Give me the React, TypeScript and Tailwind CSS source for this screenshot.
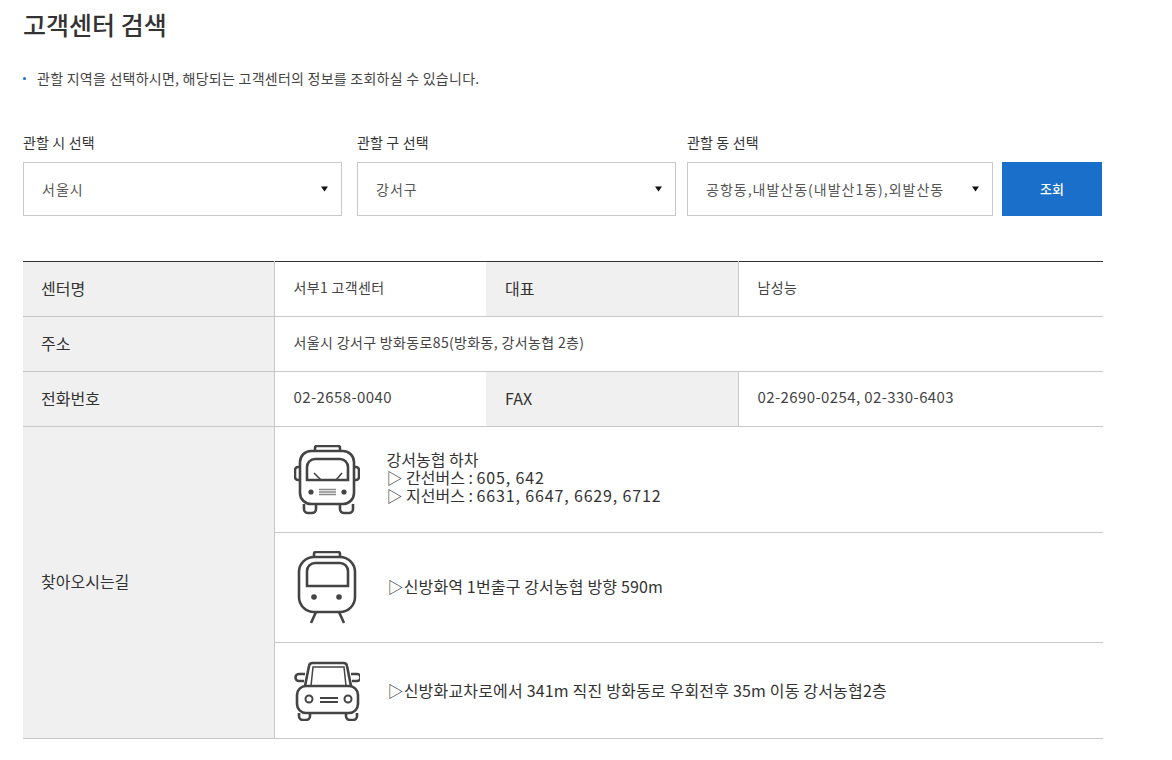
const font = '[font-family:"Noto_Sans_CJK_KR","Noto_Sans",sans-serif]';

function Caret() {
  return (
    <svg width="7" height="6" viewBox="0 0 7 6" className="shrink-0">
      <path d="M0 0.5h7L3.5 5.5z" fill="#111" />
    </svg>
  );
}

function SelectBox({ label, value, width }: { label: string; value: string; width: string }) {
  return (
    <div className={width}>
      <div className="text-[14px] leading-[20px] text-[#333] tracking-[0.15px] mb-[10px]">{label}</div>
      <div className="h-[54px] border border-[#c8c8c8] bg-white flex items-center justify-between pl-[18px] pr-[13px]">
        <span className="text-[14px] text-[#555] tracking-[1px]">{value}</span>
        <Caret />
      </div>
    </div>
  );
}

function BusIcon() {
  return (
    <svg width="66" height="70" viewBox="0 0 66 70" fill="none" stroke="#444" strokeWidth="2.6">
      <path d="M21 6V3a2 2 0 0 1 2-2h21a2 2 0 0 1 2 2v3" />
      <rect x="6" y="6" width="54" height="53" rx="11" />
      <path d="M13 35V22a8 8 0 0 1 8-8h25a8 8 0 0 1 8 8v13z" />
      <path d="M6 22H4a3 3 0 0 0-3 3v7a3 3 0 0 0 3 3h2M60 22h2a3 3 0 0 1 3 3v7a3 3 0 0 1-3 3h-2" />
      <path d="M20 28l7 7M48 28l-6 7" strokeWidth="1.6" />
      <path d="M25 44.5h17M25 47h17M25 49.5h17" strokeWidth="1.4" stroke="#888" />
      <circle cx="17" cy="47" r="2.6" fill="#444" stroke="none" />
      <circle cx="50" cy="47" r="2.6" fill="#444" stroke="none" />
      <path d="M10 59v5a4 4 0 0 0 4 4h4a4 4 0 0 0 4-4v-5M46 59v5a4 4 0 0 0 4 4h5a4 4 0 0 0 4-4v-5" />
    </svg>
  );
}

function TrainIcon() {
  return (
    <svg width="60" height="74" viewBox="0 0 60 74" fill="none" stroke="#444" strokeWidth="2.6">
      <path d="M17 6V3a2 2 0 0 1 2-2h22a2 2 0 0 1 2 2v3" />
      <rect x="2" y="6" width="56" height="55" rx="15" />
      <path d="M10 35V20a8 8 0 0 1 8-8h25a8 8 0 0 1 8 8v15z" />
      <circle cx="17" cy="46" r="2.8" fill="#444" stroke="none" />
      <circle cx="42" cy="46" r="2.8" fill="#444" stroke="none" />
      <path d="M19 61l-5 11M42 61l5 11" />
    </svg>
  );
}

function CarIcon() {
  return (
    <svg width="66" height="60" viewBox="0 0 66 60" fill="none" stroke="#444" strokeWidth="2.6">
      <path d="M11 25l4-20a3.5 3.5 0 0 1 3.5-3h31a3.5 3.5 0 0 1 3.5 3l4 20" />
      <path d="M17 25l2-19h31l2 19" strokeWidth="1.5" />
      <path d="M11 13H5a3.5 3.5 0 0 0 0 7h5M57 13h6a3.5 3.5 0 0 1 0 7h-5" />
      <rect x="3" y="25" width="61" height="27" rx="9" />
      <circle cx="15" cy="38" r="3.5" strokeWidth="2" />
      <circle cx="54" cy="38" r="3.5" strokeWidth="2" />
      <path d="M26 37h18M26 41h18" strokeWidth="2" />
      <path d="M5 52v3a4 4 0 0 0 4 4h3a4 4 0 0 0 4-4v-3M52 52v3a4 4 0 0 0 4 4h3a4 4 0 0 0 4-4v-3" />
    </svg>
  );
}

const thClass = 'bg-[#f0f0f0] border-r border-b border-[#c8c8c8] text-left font-normal text-[16px] text-[#333] pl-[18px] pb-[2px]';
const tdClass = 'border-b border-[#c8c8c8] text-[14px] tracking-[0.35px] text-[#444] pl-[19px] pb-[4px]';
const telClass = 'border-b border-[#c8c8c8] text-[15px] tracking-[0.4px] text-[#444] pl-[19px] pb-[3px]';
const routeCell = 'border-b border-[#c8c8c8] pl-[19px]';
const routeText = 'flex items-center text-[16px] leading-[18px] text-[#333]';
const numClass = 'tracking-[0.85px]';

export default function App() {
  return (
    <div className={`w-[1172px] h-[760px] bg-white overflow-hidden pl-[23px] ${font}`}>
      <h1 className="text-[25px] leading-[34px] pt-[7px] font-medium text-[#333] h-[45px] box-content">고객센터 검색</h1>

      <p className="mt-[16px] flex items-center text-[14px] leading-[20px] tracking-[0.25px] text-[#444]">
        <span className="w-[3px] h-[3px] rounded-full bg-[#1a6fcb] mr-[11px]"></span>
        관할 지역을 선택하시면, 해당되는 고객센터의 정보를 조회하실 수 있습니다.
      </p>

      <div className="mt-[44px] flex items-end">
        <SelectBox label="관할 시 선택" value="서울시" width="w-[319px]" />
        <div className="w-[15px]"></div>
        <SelectBox label="관할 구 선택" value="강서구" width="w-[319px]" />
        <div className="w-[11px]"></div>
        <SelectBox label="관할 동 선택" value="공항동,내발산동(내발산1동),외발산동" width="w-[306px]" />
        <button className="ml-[9px] w-[100px] h-[54px] bg-[#1a6fcb] text-white text-[13px] font-medium">조회</button>
      </div>

      <table className="mt-[45px] w-[1080px] table-fixed border-collapse border-t border-[#333]">
        <colgroup>
          <col className="w-[251px]" />
          <col className="w-[212px]" />
          <col className="w-[252px]" />
          <col />
        </colgroup>
        <tbody>
          <tr className="h-[55px]">
            <th className={thClass}>센터명</th>
            <td className={tdClass}>서부1 고객센터</td>
            <th className={`${thClass} pl-[19px]`}>대표</th>
            <td className={tdClass}>남성능</td>
          </tr>
          <tr className="h-[55px]">
            <th className={thClass}>주소</th>
            <td className={tdClass} colSpan={3}>서울시 강서구 방화동로85(방화동, 강서농협 2층)</td>
          </tr>
          <tr className="h-[55px]">
            <th className={thClass}>전화번호</th>
            <td className={telClass}>02-2658-0040</td>
            <th className={`${thClass} pl-[19px]`}>FAX</th>
            <td className={telClass}>02-2690-0254, 02-330-6403</td>
          </tr>
          <tr className="h-[106px]">
            <th className={`${thClass} pb-[4px]`} rowSpan={3}>찾아오시는길</th>
            <td className={routeCell} colSpan={3}>
              <div className={routeText}>
                <div className="w-[93px]"><BusIcon /></div>
                <div className="pb-[6px]">
                  강서농협 하차<br />
                  ▷ 간선버스 : <span className={numClass}>605, 642</span><br />
                  ▷ 지선버스 : <span className={numClass}>6631, 6647, 6629, 6712</span>
                </div>
              </div>
            </td>
          </tr>
          <tr className="h-[110px]">
            <td className={routeCell} colSpan={3}>
              <div className={routeText}>
                <div className="w-[94px] pl-[3px]"><TrainIcon /></div>
                <div className="pb-[4px] tracking-[0.15px]">▷신방화역 1번출구 강서농협 방향 590m</div>
              </div>
            </td>
          </tr>
          <tr className="h-[96px]">
            <td className={routeCell} colSpan={3}>
              <div className={routeText}>
                <div className="w-[94px]"><CarIcon /></div>
                <div className="pb-[2px] tracking-[0.18px]">▷신방화교차로에서 341m 직진 방화동로 우회전후 35m 이동 강서농협2층</div>
              </div>
            </td>
          </tr>
        </tbody>
      </table>
    </div>
  );
}
